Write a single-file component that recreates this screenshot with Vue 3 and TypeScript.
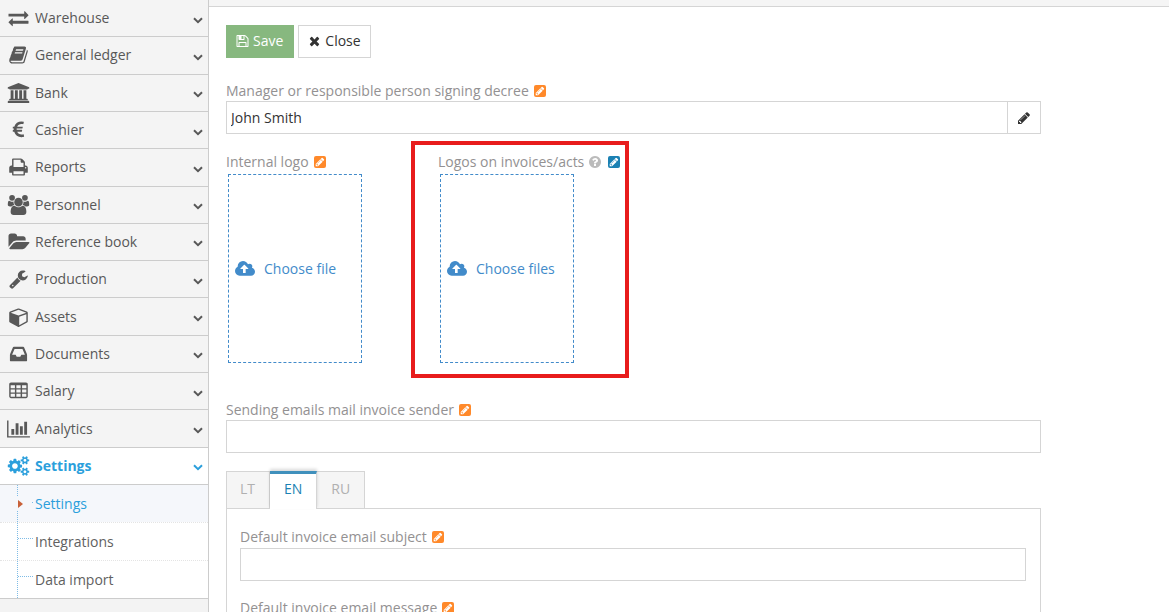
<script setup lang="ts">
import { ref } from 'vue'

interface Icon {
  w: number
  d: string
}

interface MenuItem {
  label: string
  icon: string
}

const icons: Record<string, Icon> = {
  exchange: { w: 1792, d: 'M1792 1184v192q0 13-9.5 22.5t-22.5 9.5h-1376v192q0 13-9.5 22.5t-22.5 9.5q-12 0-24-10l-319-320q-9-9-9-22 0-14 9-23l320-320q9-9 23-9 13 0 22.5 9.5t9.5 22.5v192h1376q13 0 22.5 9.5t9.5 22.5zm0-544q0 14-9 23l-320 320q-9 9-23 9-13 0-22.5-9.5t-9.5-22.5v-192h-1376q-13 0-22.5-9.5t-9.5-22.5v-192q0-13 9.5-22.5t22.5-9.5h1376v-192q0-14 9-23t23-9q12 0 24 10l319 319q9 9 9 23z' },
  book: { w: 1792, d: 'M1703 478q40 57 18 129l-275 906q-19 64-76.5 107.5t-122.5 43.5h-923q-77 0-148.5-53.5t-99.5-131.5q-24-67-2-127 0-4 3-27t4-37q1-8-3-21.5t-3-19.5q2-11 8-21t16.5-23.5 16.5-23.5q23-38 45-91.5t30-91.5q3-10 .5-30t-.5-28q3-11 17-28t17-23q21-36 42-92t25-90q1-9-2.5-32t.5-28q4-13 22-30.5t22-22.5q19-26 42.5-84.5t27.5-96.5q1-8-3-25.5t-2-26.5q2-8 9-18t18-23 17-21q8-12 16.5-30.5t15-35 16-36 19.5-32 26.5-23.5 36-11.5 47.5 5.5l-1 3q38-9 51-9h761q74 0 114 56t18 130l-274 906q-36 119-71.5 153.5t-128.5 34.5h-869q-27 0-38 15-11 16-1 43 24 70 144 70h923q29 0 56-15.5t35-41.5l300-987q7-22 5-57 38 15 59 43zm-1064 2q-4 13 2 22.5t20 9.5h608q13 0 25.5-9.5t16.5-22.5l21-64q4-13-2-22.5t-20-9.5h-608q-13 0-25.5 9.5t-16.5 22.5zm-83 256q-4 13 2 22.5t20 9.5h608q13 0 25.5-9.5t16.5-22.5l21-64q4-13-2-22.5t-20-9.5h-608q-13 0-25.5 9.5t-16.5 22.5z' },
  bank: { w: 1920, d: 'M960 0l960 384v128h-128q0 26-20.500 45t-48.500 19h-1526q-28 0-48.500-19t-20.500-45h-128v-128zM256 640h256v768h128v-768h256v768h128v-768h256v768h128v-768h256v768h59q28 0 48.500 19t20.500 45v64h-1664v-64q0-26 20.500-45t48.500-19h59zM1851 1600q28 0 48.500 19t20.500 45v128h-1920v-128q0-26 20.500-45t48.500-19z' },
  euro: { w: 1792, d: 'M1360 1307l35 159q3 12-3 22.500t-17 14.500l-5 1q-4 2-10.500 3.500t-16 4.500-21.500 5.500-25.500 5-30 5-33.500 4.500-36.500 3-38.500 1q-234 0-409-130.500t-238-351.500h-95q-13 0-22.500-9.500t-9.500-22.500v-113q0-13 9.500-22.500t22.500-9.500h66q-2-57 1-105h-67q-14 0-23-9t-9-23v-114q0-14 9-23t23-9h98q67-210 243.500-338t400.500-128q102 0 194 23 11 3 20 15 6 11 3 24l-43 159q-3 13-14 19.500t-24 2.500l-4-1q-4-1-11.500-2.500l-17.500-3.500-22.500-3.500-26-3-29-2.500-29.500-1q-126 0-226 64t-150 176h468q16 0 25 12 10 12 7 26l-24 114q-5 26-32 26h-488q-3 37 0 105h459q15 0 25 12 9 12 6 27l-24 112q-2 11-11 18.500t-20 7.500h-387q48 117 149.500 185.500t228.500 68.500q18 0 36-1.500t33.500-3.500 29.500-4.500 24.500-5 18.500-4.500l12-3 5-2q13-5 26 2 12 7 15 21z' },
  print: { w: 1792, d: 'M448 1536h896v-256h-896v256zm0-640h896v-384h-160q-40 0-68-28t-28-68v-160h-640v640zm1152 64q0-26-19-45t-45-19-45 19-19 45 19 45 45 19 45-19 19-45zm128 0v416q0 13-9.500 22.500t-22.500 9.500h-224v160q0 40-28 68t-68 28h-960q-40 0-68-28t-28-68v-160h-224q-13 0-22.500-9.500t-9.500-22.500v-416q0-79 56.500-135.500t135.500-56.500h64v-544q0-40 28-68t68-28h672q40 0 88 20t76 48l152 152q28 28 48 76t20 88v256h64q79 0 135.500 56.500t56.500 135.500z' },
  users: { w: 1920, d: 'M593 896q-162 5-265 128h-134q-82 0-138-40.500t-56-118.500q0-353 124-353 6 0 43.500 21t97.500 42.500 119 21.500q67 0 133-23-5 37-5 66 0 139 81 256zM1664 1533q0 120-73 189.500t-194 69.500h-874q-121 0-194-69.500t-73-189.500q0-53 3.500-103.500t14-109 26.500-108.500 43-97.500 62-81 85.500-53.500 111.500-20q10 0 43 21.500t73 48 107 48 135 21.500 135-21.500 107-48 73-48 43-21.500q61 0 111.500 20t85.500 53.500 62 81 43 97.500 26.500 108.500 14 109 3.500 103.500zM640 256a256 256 0 1 1-512 0a256 256 0 1 1 512 0zM1344 640a384 384 0 1 1-768 0a384 384 0 1 1 768 0zM1920 865q0 78-56 118.500t-138 40.500h-134q-103-123-265-128 81-117 81-256 0-29-5-66 66 23 133 23 59 0 119-21.500t97.500-42.500 43.500-21q124 0 124 353zM1792 256a256 256 0 1 1-512 0a256 256 0 1 1 512 0z' },
  folder: { w: 1920, d: 'M1943 952q0 31-31 66l-336 396q-43 51-120.500 86.500t-143.500 35.500h-1088q-34 0-60.500-13t-26.500-43q0-31 31-66l336-396q43-51 120.500-86.500t143.500-35.500h1088q34 0 60.500 13t26.500 43zm-343-344v160h-832q-94 0-197 47.500t-164 119.500l-337 396-5 6q0-4-.500-12.500t-.500-12.500v-960q0-92 66-158t158-66h320q92 0 158 66t66 158v32h544q92 0 158 66t66 158z' },
  wrench: { w: 1792, d: 'M448 1472q0-26-19-45t-45-19-45 19-19 45 19 45 45 19 45-19 19-45zm644-420l-682 682q-37 37-90 37-52 0-91-37l-106-108q-38-36-38-90 0-53 38-91l681-681q39 98 114.500 173.500t173.500 114.500zm634-435q0 39-23 106-47 134-164.500 217.500t-258.500 83.500q-185 0-316.500-131.500t-131.500-316.500 131.500-316.500 316.500-131.500q58 0 121.500 16.500t107.500 46.500q16 11 16 28t-16 28l-293 169v224l193 107q5-3 79-48.500t135.500-81 70.500-35.500q15 0 23.500 10t8.500 25z' },
  cube: { w: 1664, d: 'M896 1629l640-349v-636l-640 233v752zm-64-865l698-254-698-254-698 254zm832-252v768q0 35-18 65t-49 47l-704 384q-28 16-61 16t-61-16l-704-384q-31-17-49-47t-18-65v-768q0-40 23-73t61-47l704-256q22-8 44-8t44 8l704 256q38 14 61 47t23 73z' },
  inbox: { w: 1792, d: 'M1151 960h316q-1-3-2.500-8t-2.500-8l-212-496h-708l-212 496q-1 2-2.500 8t-2.500 8h316l95 192h320zm513 30v482q0 26-19 45t-45 19h-1408q-26 0-45-19t-19-45v-482q0-62 25-123l238-552q10-25 36.500-42t52.500-17h832q26 0 52.500 17t36.500 42l238 552q25 61 25 123z' },
  table: { w: 1664, d: 'M160 128h1344q66 0 113 47t47 113v1088q0 66-47 113t-113 47h-1344q-66 0-113-47t-47-113v-1088q0-66 47-113t113-47zM128 384v256h384v-256zM640 384v256h384v-256zM1152 384v256h384v-256zM128 768v256h384v-256zM640 768v256h384v-256zM1152 768v256h384v-256zM128 1152v256h384v-256zM640 1152v256h384v-256zM1152 1152v256h384v-256z' },
  chart: { w: 2048, d: 'M0 128h128v1408h1920v128h-2048zM384 896h256v512h-256zM768 384h256v1024h-256zM1152 640h256v768h-256zM1536 256h256v1152h-256z' },
  cogs: { w: 1920, d: 'M896 896q0-106-75-181t-181-75-181 75-75 181 75 181 181 75 181-75 75-181zm768 512q0-52-38-90t-90-38-90 38-38 90q0 53 37.500 90.500t90.500 37.500 90.500-37.500 37.500-90.500zm0-1024q0-52-38-90t-90-38-90 38-38 90q0 53 37.500 90.500t90.500 37.500 90.500-37.500 37.500-90.500zm-384 421v185q0 10-7 19.500t-16 10.500l-155 24q-11 35-32 76 34 48 90 115 7 11 7 20 0 12-7 19-23 30-82.500 89.500t-78.500 59.500q-11 0-21-7l-115-90q-37 19-77 31-11 108-23 155-7 24-30 24h-186q-11 0-20-7.500t-10-17.500l-23-153q-34-10-75-31l-118 89q-7 7-20 7-11 0-21-8-144-133-144-160 0-9 7-19 10-14 41-53t47-61q-23-44-35-82l-152-24q-10-1-17-9.500t-7-19.500v-185q0-10 7-19.500t16-10.500l155-24q11-35 32-76-34-48-90-115-7-11-7-20 0-12 7-20 22-30 82-89t79-59q11 0 21 7l115 90q34-18 77-32 11-108 23-154 7-24 30-24h186q11 0 20 7.500t10 17.500l23 153q34 10 75 31l118-89q8-7 20-7 11 0 21 8 144 133 144 160 0 8-7 19-12 16-42 54t-45 60q23 48 34 82l152 23q10 2 17 10.500t7 19.500zm640 533v140q0 16-149 31-12 27-30 52 51 113 51 138 0 4-4 7-122 71-124 71-8 0-46-47t-52-68q-20 2-30 2t-30-2q-14 21-52 68t-46 47q-2 0-124-71-4-3-4-7 0-25 51-138-18-25-30-52-149-15-149-31v-140q0-16 149-31 13-29 30-52-51-113-51-138 0-4 4-7 4-2 35-20t59-34 30-16q8 0 46 46.500t52 67.500q20-2 30-2t30 2q51-71 92-112l6-2q4 0 124 70 4 3 4 7 0 25-51 138 17 23 30 52 149 15 149 31zm0-1024v140q0 16-149 31-12 27-30 52 51 113 51 138 0 4-4 7-122 71-124 71-8 0-46-47t-52-68q-20 2-30 2t-30-2q-14 21-52 68t-46 47q-2 0-124-71-4-3-4-7 0-25 51-138-18-25-30-52-149-15-149-31v-140q0-16 149-31 13-29 30-52-51-113-51-138 0-4 4-7 4-2 35-20t59-34 30-16q8 0 46 46.500t52 67.500q20-2 30-2t30 2q51-71 92-112l6-2q4 0 124 70 4 3 4 7 0 25-51 138 17 23 30 52 149 15 149 31z' },
}

const pencil = 'M491 1536l91-91-235-235-91 91v107h128v128h107zm523-928q0-22-22-22-10 0-17 7l-542 542q-7 7-7 17 0 22 22 22 10 0 17-7l542-542q7-7 7-17zm-54-192l416 416-832 832h-416v-416zm683 96q0 53-37 90l-166 166-416-416 166-165q36-38 90-38 53 0 91 38l235 234q37 39 37 91z'
const floppy = 'M512 1536h768v-384h-768v384zm896 0h128v-896q0-14-10-38.500t-20-34.500l-281-281q-10-10-34-20t-39-10v416q0 40-28 68t-68 28h-576q-40 0-68-28t-28-68v-416h-128v1280h128v-416q0-40 28-68t68-28h832q40 0 68 28t28 68v416zm-384-928v-320q0-13-9.500-22.500t-22.500-9.500h-192q-13 0-22.500 9.500t-9.500 22.500v320q0 13 9.500 22.500t22.500 9.500h192q13 0 22.500-9.500t9.500-22.500zm640 32v928q0 40-28 68t-68 28h-1344q-40 0-68-28t-28-68v-1344q0-40 28-68t68-28h928q40 0 88 20t76 48l280 280q28 28 48 76t20 88z'
const times = 'M1490 1322q0 40-28 68l-136 136q-28 28-68 28t-68-28l-294-294-294 294q-28 28-68 28t-68-28l-136-136q-28-28-28-68t28-68l294-294-294-294q-28-28-28-68t28-68l136-136q28-28 68-28t68 28l294 294 294-294q28-28 68-28t68 28l136 136q28 28 28 68t-28 68l-294 294 294 294q28 28 28 68z'
const question = 'M1024 1376v-192q0-14-9-23t-23-9h-192q-14 0-23 9t-9 23v192q0 14 9 23t23 9h192q14 0 23-9t9-23zm256-672q0-88-55.500-163t-138.500-116-170-41q-243 0-371 213-15 24 8 42l132 100q7 6 19 6 16 0 25-12 53-68 86-92 34-24 86-24 48 0 85.500 26t37.500 59q0 38-20 61t-68 45q-63 28-115.500 86.500t-52.500 125.500v36q0 14 9 23t23 9h192q14 0 23-9t9-23q0-19 21.500-49.500t54.500-49.500q32-18 49-28.500t46-35 44.500-48 28-60.500 12.500-81zm384 192q0 209-103 385.500t-279.500 279.500-385.500 103-385.500-103-279.500-279.500-103-385.500 103-385.500 279.500-279.500 385.500-103 385.500 103 279.500 279.500 103 385.500z'
const cloud = 'M1280 864q0-14-9-23l-352-352q-9-9-23-9t-23 9l-351 351q-10 12-10 24 0 14 9 23t23 9h224v352q0 13 9.500 22.500t22.500 9.500h192q13 0 22.500-9.500t9.500-22.500v-352h224q13 0 22.500-9.500t9.500-22.500zm640 288q0 159-112.500 271.500t-271.500 112.500h-1088q-185 0-316.500-131.500t-131.500-316.500q0-130 70-240t188-165q-2-30-2-43 0-212 150-362t362-150q156 0 285.500 87t188.500 231q71-62 166-62 106 0 181 75t75 181q0 76-41 138 130 31 213.500 135.500t83.500 238.500z'

const menu: MenuItem[] = [
  { label: 'Warehouse', icon: 'exchange' },
  { label: 'General ledger', icon: 'book' },
  { label: 'Bank', icon: 'bank' },
  { label: 'Cashier', icon: 'euro' },
  { label: 'Reports', icon: 'print' },
  { label: 'Personnel', icon: 'users' },
  { label: 'Reference book', icon: 'folder' },
  { label: 'Production', icon: 'wrench' },
  { label: 'Assets', icon: 'cube' },
  { label: 'Documents', icon: 'inbox' },
  { label: 'Salary', icon: 'table' },
  { label: 'Analytics', icon: 'chart' },
  { label: 'Settings', icon: 'cogs' },
]

const submenu: string[] = ['Settings', 'Integrations', 'Data import']
const languages: string[] = ['LT', 'EN', 'RU']

const language = ref('EN')
const manager = ref('John Smith')
const sender = ref('')
const subject = ref('')
const message = ref('')
</script>

<template>
  <div class="layout">
    <nav class="sidebar" aria-label="Main menu">
      <ul class="menu">
        <li v-for="item in menu" :key="item.label" class="menu-item" :class="{ active: item.label === 'Settings' }">
          <a href="#" class="menu-link">
            <svg class="menu-icon" :viewBox="`0 0 ${icons[item.icon].w} 1792`" aria-hidden="true">
              <path :d="icons[item.icon].d" :fill-rule="item.icon === 'table' ? 'evenodd' : 'nonzero'" />
            </svg>
            <span class="menu-label">{{ item.label }}</span>
            <svg class="chevron" viewBox="0 0 10 7" aria-hidden="true"><path d="M1 1.300L5 5.200L9 1.300" /></svg>
          </a>
        </li>
      </ul>
      <ul class="submenu">
        <li v-for="(name, i) in submenu" :key="name">
          <a href="#" class="sub-link" :class="{ current: i === 0 }">
            <svg v-if="i === 0" class="caret" viewBox="0 0 6 14" aria-hidden="true"><path d="M1 3L6 7L1 11z" /></svg>
            {{ name }}
          </a>
        </li>
      </ul>
    </nav>

    <main class="main">
      <div class="topbar"></div>
      <form class="form" @submit.prevent>
        <div class="actions">
          <button type="submit" class="btn save">
            <svg class="btn-icon" viewBox="64 0 1664 1792" aria-hidden="true"><path :d="floppy" /></svg>Save
          </button>
          <button type="button" class="btn close">
            <svg class="btn-icon" viewBox="64 0 1664 1792" aria-hidden="true"><path :d="times" /></svg>Close
          </button>
        </div>

        <div class="field">
          <div class="label-row">
            <label for="manager">Manager or responsible person signing decree</label>
            <span class="badge"><svg viewBox="0 0 1792 1792" aria-hidden="true"><path :d="pencil" /></svg></span>
          </div>
          <div class="input-group">
            <input id="manager" v-model="manager" type="text" class="input" />
            <button type="button" class="addon" aria-label="Edit">
              <svg viewBox="0 0 1792 1792" aria-hidden="true"><path :d="pencil" /></svg>
            </button>
          </div>
        </div>

        <div class="logos">
          <div class="logo">
            <div class="label-row">
              <label for="internal-logo">Internal logo</label>
              <span class="badge"><svg viewBox="0 0 1792 1792" aria-hidden="true"><path :d="pencil" /></svg></span>
            </div>
            <label class="drop">
              <input id="internal-logo" type="file" class="file" />
              <svg class="cloud" viewBox="0 0 1920 1792" aria-hidden="true"><path :d="cloud" /></svg>
              <span>Choose file</span>
            </label>
          </div>
          <div class="logo marked">
            <div class="label-row">
              <label for="invoice-logos">Logos on invoices/acts</label>
              <svg class="help" viewBox="128 128 1536 1536" aria-hidden="true"><path :d="question" /></svg>
              <span class="badge blue"><svg viewBox="0 0 1792 1792" aria-hidden="true"><path :d="pencil" /></svg></span>
            </div>
            <label class="drop">
              <input id="invoice-logos" type="file" multiple class="file" />
              <svg class="cloud" viewBox="0 0 1920 1792" aria-hidden="true"><path :d="cloud" /></svg>
              <span>Choose files</span>
            </label>
          </div>
        </div>

        <div class="field">
          <div class="label-row">
            <label for="sender">Sending emails mail invoice sender</label>
            <span class="badge"><svg viewBox="0 0 1792 1792" aria-hidden="true"><path :d="pencil" /></svg></span>
          </div>
          <input id="sender" v-model="sender" type="text" class="input" />
        </div>

        <div class="tabs" role="tablist">
          <button
            v-for="lang in languages"
            :key="lang"
            type="button"
            role="tab"
            class="tab"
            :class="{ selected: lang === language }"
            :aria-selected="lang === language"
            @click="language = lang"
          >{{ lang }}</button>
        </div>
        <div class="panel" role="tabpanel">
          <div class="field">
            <div class="label-row">
              <label for="subject">Default invoice email subject</label>
              <span class="badge"><svg viewBox="0 0 1792 1792" aria-hidden="true"><path :d="pencil" /></svg></span>
            </div>
            <input id="subject" v-model="subject" type="text" class="input" />
          </div>
          <div class="field">
            <div class="label-row">
              <label for="message">Default invoice email message</label>
              <span class="badge"><svg viewBox="0 0 1792 1792" aria-hidden="true"><path :d="pencil" /></svg></span>
            </div>
            <textarea id="message" v-model="message" class="input area"></textarea>
          </div>
        </div>
      </form>
    </main>
  </div>
</template>

<style>
body {
  margin: 0;
  background: #fff;
}
</style>

<style scoped>
* {
  box-sizing: border-box;
}

.layout {
  display: flex;
  height: 100vh;
  overflow: hidden;
  font-family: "Open Sans", "Noto Sans", sans-serif;
  font-size: 14px;
  line-height: 20px;
  color: #333;
}

svg {
  display: block;
  flex: none;
  fill: currentColor;
}

button,
input,
textarea {
  margin: 0;
  font: inherit;
  color: inherit;
  border-radius: 0;
}

.sidebar {
  flex: none;
  width: 209px;
  background: #f3f3f3;
  border-right: 1px solid #ccc;
}

.menu,
.submenu {
  margin: 0;
  padding: 0;
  list-style: none;
}

.menu {
  display: grid;
  grid-auto-rows: 1fr;
  min-height: 485px;
}

.menu-item {
  display: grid;
  border-bottom: 1px solid #ccc;
}

.menu-link {
  display: flex;
  align-items: center;
  padding: 0 5px 0 7px;
  color: #585858;
  background: #f4f4f4;
  text-decoration: none;
}

.menu-icon {
  width: 23px;
  height: 20px;
}

.menu-label {
  flex: 1;
  margin-left: 5px;
}

.chevron {
  width: 10px;
  height: 7px;
  margin-top: 4px;
  fill: none;
  stroke: currentColor;
  stroke-width: 2;
}

.active .menu-link {
  color: #2b9fdc;
  background: #fff;
  font-weight: 700;
}

.submenu {
  position: relative;
  background: #fff;
  border-bottom: 1px solid #ccc;
}

.submenu::before {
  content: "";
  position: absolute;
  z-index: 1;
  top: 0;
  bottom: 0;
  left: 17px;
  border-left: 1px dotted #7fbce6;
}

.submenu li + li {
  border-top: 1px dotted #e4e4e4;
}

.sub-link {
  position: relative;
  display: block;
  padding: 9px 8px 8px 35px;
  color: #616161;
  text-decoration: none;
}

.sub-link::before {
  content: "";
  position: absolute;
  top: 15px;
  left: 18px;
  width: 15px;
  border-top: 1px dotted #7fbce6;
}

.sub-link.current {
  color: #2b9fdc;
  background: #f5f7fb;
}

.sub-link.current::before {
  top: 17px;
  left: 32px;
  width: 1px;
}

.caret {
  position: absolute;
  z-index: 2;
  top: 12px;
  left: 17px;
  width: 6px;
  height: 14px;
  color: #c86139;
  background: #f5f7fb;
}

.main {
  flex: 1;
  min-width: 0;
}

.topbar {
  height: 7px;
  background: #f5f5f5;
  border-bottom: 1px solid #d5d5d5;
}

.form {
  padding: 18px 128px 0 17px;
}

.actions {
  display: flex;
  gap: 4px;
  margin-bottom: 23px;
}

.btn {
  display: flex;
  align-items: center;
  gap: 4px;
  height: 33px;
  padding: 0 9px 2px;
  border: 1px solid #d5d5d5;
  background: #fff;
}

.btn-icon {
  width: 13px;
  height: 14px;
}

.save {
  padding-right: 10px;
  color: #fff;
  background: #87b87f;
  border-color: #87b87f;
}

.label-row {
  display: flex;
  align-items: center;
  gap: 5px;
  height: 20px;
  color: #939192;
}

.badge {
  display: grid;
  place-items: center;
  width: 12px;
  height: 12px;
  border-radius: 2px;
  color: #fff;
  background: #ff892a;
}

.badge svg {
  width: 10px;
  height: 10px;
}

.badge.blue {
  margin-left: 2px;
  background: #1b81b3;
}

.help {
  width: 12px;
  height: 12px;
  color: #bbb;
}

.input {
  display: block;
  width: 100%;
  height: 33px;
  padding: 0 4px;
  border: 1px solid #d5d5d5;
  background: #fff;
}

.input-group {
  display: flex;
}

.input-group .input {
  flex: 1;
  min-width: 0;
}

.addon {
  display: grid;
  place-items: center;
  width: 34px;
  height: 33px;
  margin-left: -1px;
  padding: 0;
  border: 1px solid #d5d5d5;
  background: #fff;
}

.addon svg {
  width: 14px;
  height: 14px;
}

.logos {
  display: flex;
  align-items: flex-start;
  margin: 18px 0 37px;
}

.logo {
  flex: none;
  width: 212px;
}

.marked {
  position: relative;
}

.marked::after {
  content: "";
  position: absolute;
  top: -11px;
  left: -27px;
  right: 21px;
  bottom: -15px;
  border: 4px solid #e81c1c;
  pointer-events: none;
}

.drop {
  display: flex;
  align-items: center;
  gap: 9px;
  width: 134px;
  height: 189px;
  margin: 2px 0 0 2px;
  padding-left: 6px;
  border: 1px dashed #428bca;
  color: #428bca;
  cursor: pointer;
}

.file {
  position: absolute;
  width: 1px;
  height: 1px;
  opacity: 0;
}

.cloud {
  width: 20px;
  height: 20px;
}

.tabs {
  display: flex;
  margin-top: 18px;
}

.tab {
  height: 37px;
  padding: 0 14px 2px;
  border: 1px solid #d5d5d5;
  border-width: 1px 1px 0 0;
  color: #b0b0b0;
  background: #f5f5f5;
}

.tab:first-child {
  padding-left: 13px;
  border-left-width: 1px;
}

.tab.selected {
  position: relative;
  height: 38px;
  margin-bottom: -1px;
  padding-bottom: 5px;
  border-top: 3px solid #4090bc;
  color: #1b81b3;
  background: #fff;
  box-shadow: 0 -2px 3px rgba(0, 0, 0, 0.15);
}

.panel {
  padding: 18px 14px 18px 13px;
  border: 1px solid #d5d5d5;
}

.panel .field + .field {
  margin-top: 17px;
}

.panel .input {
  margin-top: 1px;
}

.area {
  height: 120px;
}
</style>
